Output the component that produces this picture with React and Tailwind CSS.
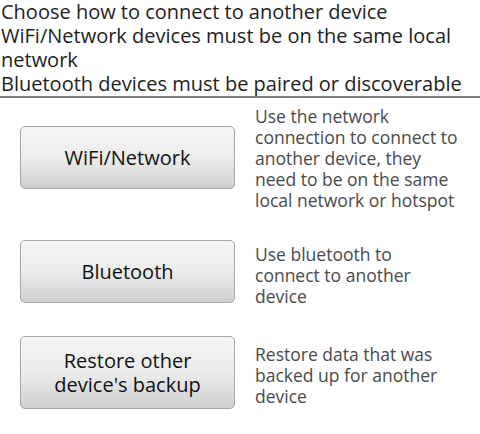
import React from 'react';

const rows = [
  {
    label: ['WiFi/Network'],
    desc: 'Use the network connection to connect to another device, they need to be on the same local network or hotspot',
    btnClass: 'mt-[28px] h-[63px]',
    descClass: 'mt-[8px]',
  },
  {
    label: ['Bluetooth'],
    desc: 'Use bluetooth to connect to another device',
    btnClass: 'mt-[29px] h-[63px]',
    descClass: 'mt-[33px]',
  },
  {
    label: ['Restore other', "device's backup"],
    desc: 'Restore data that was backed up for another device',
    btnClass: 'mt-[29px] h-[73px]',
    descClass: 'mt-[37px]',
  },
];

const App = () => {
  return (
    <div className="w-[480px] h-[434px] bg-white overflow-hidden font-['Open_Sans',sans-serif]">
      {/* 标题说明 */}
      <div className="px-[1px] text-[20px] leading-[24px] text-[#222222]">
        <div>Choose how to connect to another device</div>
        <div>WiFi/Network devices must be on the same local network</div>
        <div>Bluetooth devices must be paired or discoverable</div>
      </div>
      <div className="h-[2px] bg-[#808080]" />

      {/* 连接方式 */}
      {rows.map((row) => (
        <div key={row.label[0]} className="flex items-start">
          <button
            className={`ml-[20px] w-[215px] shrink-0 rounded-[5px] border border-[#a6a6a6] bg-gradient-to-b from-[#f5f5f5] via-[#ececec] to-[#cfcfcf] text-[20px] leading-[24px] text-[#111111] flex flex-col items-center justify-center ${row.btnClass}`}
          >
            {row.label.map((l) => (
              <span key={l}>{l}</span>
            ))}
          </button>
          <div className={`ml-[20px] w-[204px] text-[17.5px] leading-[21px] text-[#4a4a4a] ${row.descClass}`}>
            {row.desc}
          </div>
        </div>
      ))}
    </div>
  );
};

export default App;
